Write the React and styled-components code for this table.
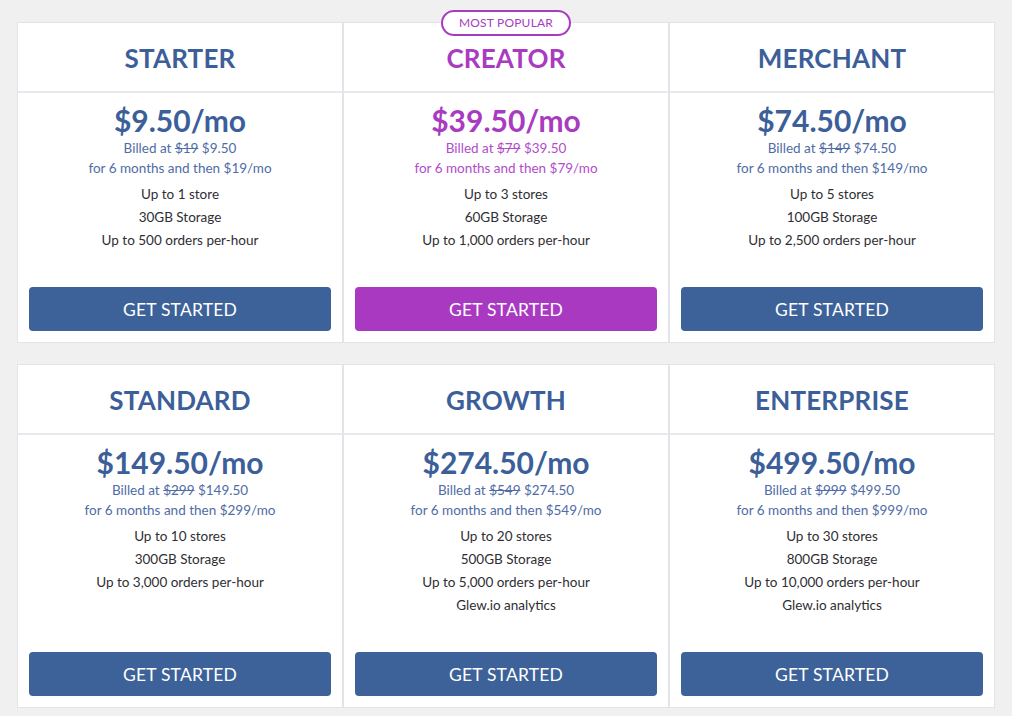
import React from 'react';
import styled, { createGlobalStyle, css } from 'styled-components';

const GlobalStyle = createGlobalStyle`
  body {
    margin: 0;
    background: #f0f0f0;
    font-family: Lato, "Open Sans", sans-serif;
  }
`;

const BLUE = '#3c5f99';
const PURPLE = '#a93bc1';

const Page = styled.div`
  padding: 22px 17px;
  display: flex;
  flex-direction: column;
  gap: 21px;
`;

const Row = styled.div`
  display: grid;
  grid-template-columns: repeat(3, 326px);
  align-items: stretch;
`;

const Card = styled.div`
  position: relative;
  display: flex;
  flex-direction: column;
  background: #fff;
  border: 1px solid #e3e4ea;
  text-align: center;
`;

const Head = styled.div`
  height: 68px;
  display: flex;
  align-items: center;
  justify-content: center;
  border-bottom: 2px solid #e8e9ef;
  h2 {
    margin: 2px 0 0;
    font-size: 26px;
    font-weight: 700;
    letter-spacing: 0.2px;
    color: ${p => (p.$popular ? PURPLE : BLUE)};
  }
`;

const Badge = styled.div`
  position: absolute;
  top: -13px;
  left: 50%;
  transform: translateX(-50%);
  width: 126px;
  height: 22px;
  line-height: 22px;
  border: 2px solid ${PURPLE};
  border-radius: 13px;
  background: #fff;
  color: ${PURPLE};
  font-size: 12px;
  letter-spacing: 0.2px;
`;

const Body = styled.div`
  flex: 1;
  display: flex;
  flex-direction: column;
  padding: 9px 11px 11px;
`;

const Price = styled.div`
  font-size: 30px;
  line-height: 36px;
  font-weight: 700;
  color: ${p => (p.$popular ? PURPLE : BLUE)};
`;

const Billed = styled.div`
  font-size: 13.5px;
  line-height: 20px;
  color: ${p => (p.$popular ? '#b24ccb' : '#4f6ca6')};
  s {
    text-decoration: line-through;
  }
`;

const Features = styled.ul`
  list-style: none;
  margin: 5px 0 0;
  padding: 0;
  li {
    font-size: 13.5px;
    line-height: 23px;
    color: #2e2e33;
  }
`;

const Button = styled.button`
  display: block;
  width: 100%;
  height: 44px;
  margin-top: auto;
  border: none;
  border-radius: 4px;
  font-family: inherit;
  font-size: 17.5px;
  color: #fff;
  letter-spacing: 0.2px;
  cursor: pointer;
  ${p =>
    p.$popular
      ? css`background: #aa39c1;`
      : css`background: #3c6299;`}
`;

const Spacer = styled.div`
  height: 35px;
`;

const plans = [
  [
    { name: 'STARTER', price: '9.50', full: '19', features: ['Up to 1 store', '30GB Storage', 'Up to 500 orders per-hour'] },
    { name: 'CREATOR', price: '39.50', full: '79', popular: true, features: ['Up to 3 stores', '60GB Storage', 'Up to 1,000 orders per-hour'] },
    { name: 'MERCHANT', price: '74.50', full: '149', features: ['Up to 5 stores', '100GB Storage', 'Up to 2,500 orders per-hour'] },
  ],
  [
    { name: 'STANDARD', price: '149.50', full: '299', features: ['Up to 10 stores', '300GB Storage', 'Up to 3,000 orders per-hour'] },
    { name: 'GROWTH', price: '274.50', full: '549', features: ['Up to 20 stores', '500GB Storage', 'Up to 5,000 orders per-hour', 'Glew.io analytics'] },
    { name: 'ENTERPRISE', price: '499.50', full: '999', features: ['Up to 30 stores', '800GB Storage', 'Up to 10,000 orders per-hour', 'Glew.io analytics'] },
  ],
];

function PlanCard({ plan }) {
  const { name, price, full, popular, features } = plan;
  return (
    <Card>
      {popular && <Badge>MOST POPULAR</Badge>}
      <Head $popular={popular}>
        <h2>{name}</h2>
      </Head>
      <Body>
        <Price $popular={popular}>${price}/mo</Price>
        <Billed $popular={popular}>
          Billed at <s>${full}</s> ${price}
        </Billed>
        <Billed $popular={popular}>for 6 months and then ${full}/mo</Billed>
        <Features>
          {features.map(f => (
            <li key={f}>{f}</li>
          ))}
        </Features>
        <Spacer />
        <Button $popular={popular}>GET STARTED</Button>
      </Body>
    </Card>
  );
}

export default function App() {
  return (
    <>
      <GlobalStyle />
      <Page>
        {plans.map((row, i) => (
          <Row key={i}>
            {row.map(p => (
              <PlanCard key={p.name} plan={p} />
            ))}
          </Row>
        ))}
      </Page>
    </>
  );
}
